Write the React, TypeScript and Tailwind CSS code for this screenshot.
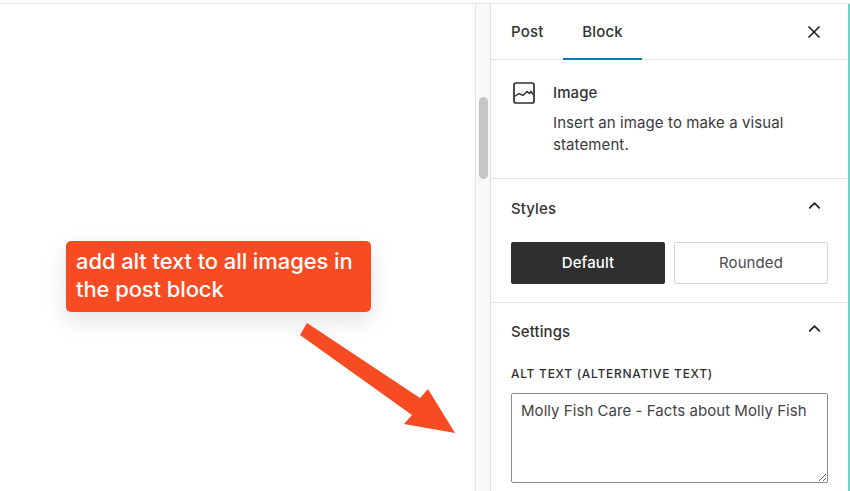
import { X, ChevronUp } from 'lucide-react'

function ImageIcon() {
  return (
    <svg width="24" height="24" viewBox="0 0 24 24" fill="none" className="text-[#2f2f2f]">
      <rect x="2" y="2" width="20" height="20" rx="2" stroke="currentColor" strokeWidth="1.7" />
      <path d="M2.5 15.5 L7 12.5 L11 14.5 L15 10.5 L17.5 12.5 L19 10.5 L21.5 14" stroke="currentColor" strokeWidth="1.4" />
    </svg>
  )
}

function SectionHeader({ title }: { title: string }) {
  return (
    <div className="flex items-center justify-between">
      <h2 className="text-[15px] leading-[20px] font-medium tracking-[0.1px] text-[#333]">{title}</h2>
      <ChevronUp size={19} strokeWidth={2.2} className="text-[#1e1e1e] mr-[4px] -mt-[7px]" />
    </div>
  )
}

export default function App() {
  return (
    <div
      className="w-[850px] h-[491px] overflow-hidden bg-white flex flex-col"
      style={{ fontFamily: 'Inter, "Liberation Sans", sans-serif' }}
    >
      <div className="h-[4px] shrink-0 border-b border-[#e2e2e2]" />
      <div className="flex-1 flex min-h-0">
        <main className="relative w-[475px] shrink-0">
          <div className="absolute left-[66px] top-[237px] w-[305px] h-[71px] bg-[#f74b23] rounded-[5px] px-[10px] pt-[6px] text-white text-[22px] leading-[28px] font-[550] tracking-[-0.1px] shadow-[0_8px_24px_rgba(0,0,0,0.12)]">
            add alt text to all images in the post block
          </div>
          <svg className="absolute left-[290px] top-[310px]" width="175" height="130" viewBox="290 314 175 130">
            <path
              d="M300 335 L307 323 L420 398 L428 389 L455 433 L404 424 L412 415 Z"
              fill="#f74b23"
            />
          </svg>
        </main>

        <div className="w-[15px] shrink-0 bg-[#f8f8f8] border-l border-[#e4e4e4] pl-[3px] pt-[93px]">
          <div className="w-[9px] h-[82px] rounded-full bg-[#c6c6c6]" />
        </div>

        <aside className="w-[358px] shrink-0 border-l border-[#e2e2e2] text-[#2f2f2f]">
          <div className="h-[56px] pl-[20px] pr-[24px] flex items-center justify-between border-b border-[#e2e2e2]">
            <div className="flex h-full text-[15px] font-medium tracking-[0.2px] text-[#333]">
              <div className="flex items-center w-[52px] pt-[1px]">Post</div>
              <div className="relative flex items-center justify-center w-[79px] pt-[1px]">
                Block
                <div className="absolute left-0 right-0 -bottom-[1px] h-[2px] bg-[#007cba]" />
              </div>
            </div>
            <X size={20} strokeWidth={2} className="text-[#1e1e1e]" />
          </div>

          <div className="h-[119px] pl-[21px] pr-[16px] pt-[21px] flex gap-[15px] border-b border-[#e2e2e2]">
            <div className="w-[26px] shrink-0">
              <ImageIcon />
            </div>
            <div className="text-[15px] leading-[22px] tracking-[0.1px] text-[#3a3a3a]">
              <div className="font-medium text-[#333] leading-[20px] mb-[9px] mt-[2px]">Image</div>
              <p>Insert an image to make a visual statement.</p>
            </div>
          </div>

          <div className="h-[124px] pl-[20px] pr-[20px] pt-[20px] border-b border-[#e2e2e2]">
            <SectionHeader title="Styles" />
            <div className="mt-[23px] flex gap-[9px] text-[15px] tracking-[0.1px]">
              <button className="w-[154px] h-[42px] bg-[#2f2f2f] text-white font-medium rounded-[2px]">Default</button>
              <button className="w-[154px] h-[42px] bg-white border border-[#d6d6d6] text-[#4a4a4a] rounded-[2px]">Rounded</button>
            </div>
          </div>

          <div className="pl-[20px] pr-[20px] pt-[19px]">
            <SectionHeader title="Settings" />
            <label className="block mt-[24px] text-[12px] leading-[16px] font-medium tracking-[0.72px] text-[#2f2f2f]">
              ALT TEXT (ALTERNATIVE TEXT)
            </label>
            <textarea
              readOnly
              defaultValue="Molly Fish Care - Facts about Molly Fish"
              className="block mt-[11px] w-[317px] h-[90px] border border-[#8d8d8d] rounded-[2px] px-[9px] py-[6px] text-[15px] leading-[21px] tracking-[0.05px] text-[#444] outline-none"
            />
          </div>
        </aside>

        <div className="w-[2px] shrink-0 bg-[#6fd3c4]" />
      </div>
    </div>
  )
}
